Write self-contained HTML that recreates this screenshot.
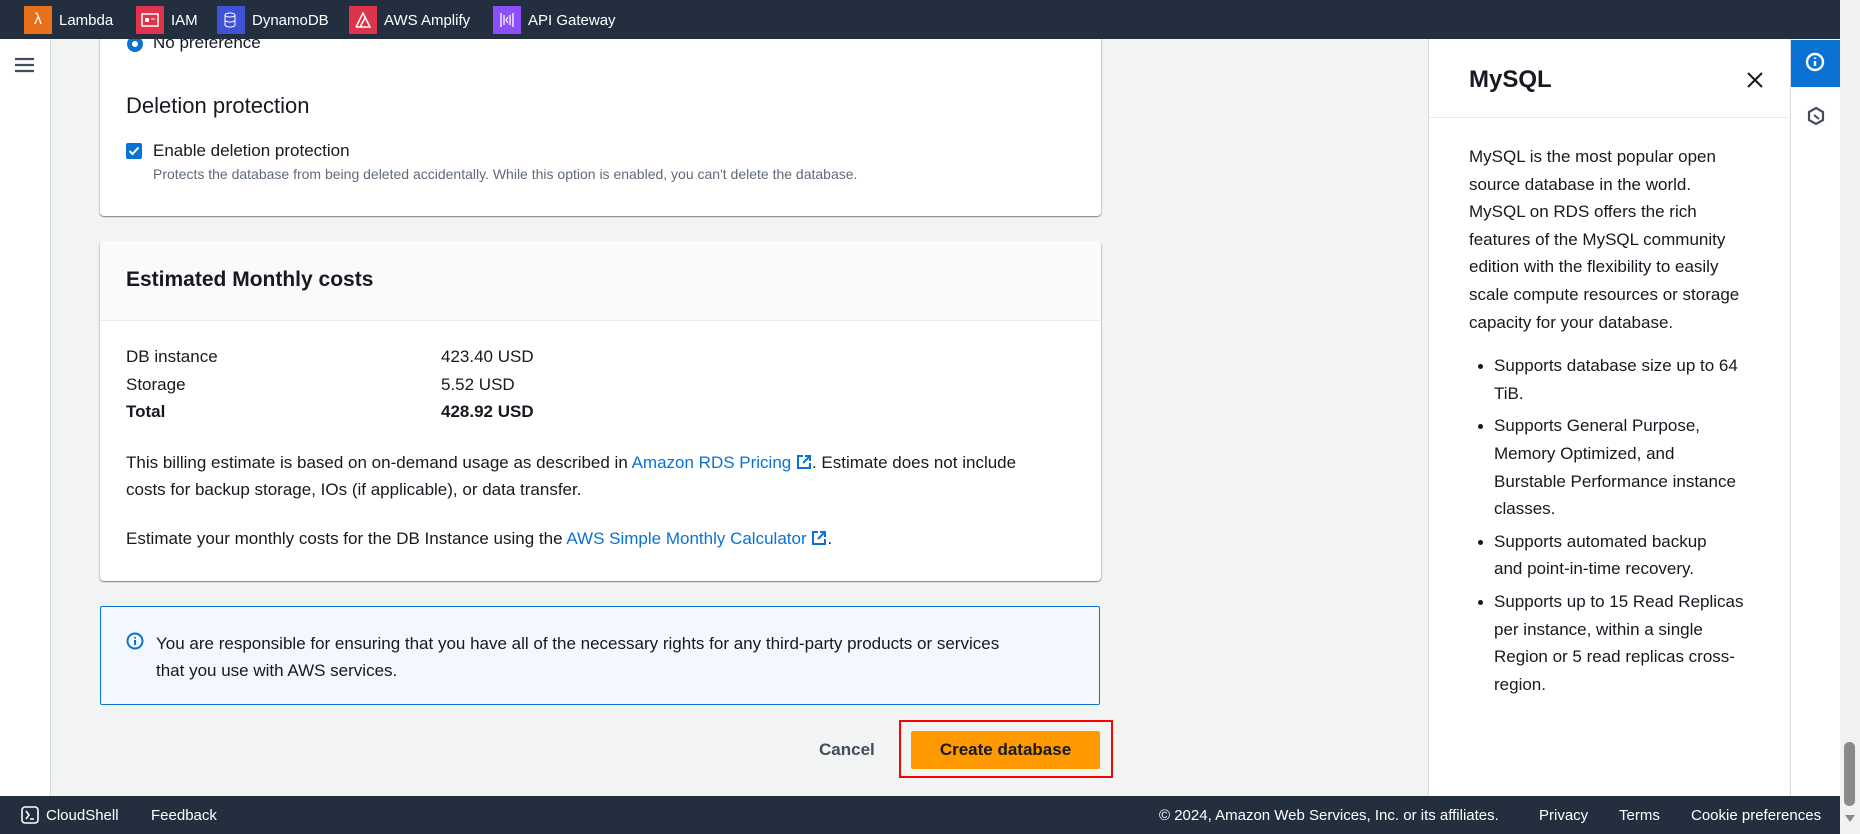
<!DOCTYPE html>
<html><head><meta charset="utf-8"><style>
*{box-sizing:border-box;margin:0;padding:0}
body{width:1860px;height:834px;overflow:hidden;position:relative;background:#f2f3f3;font-family:"Liberation Sans",sans-serif;color:#16191f}
.abs{position:absolute}
#top{left:0;top:0;width:1840px;height:39px;background:#232f3e;z-index:5}
.svc{position:absolute;top:6px;height:28px;display:flex;align-items:center;color:#fff;font-size:15px}
.ic{width:28px;height:28px;margin-right:7px;display:flex;align-items:center;justify-content:center;color:#fff;font-size:16px}
#nav{left:0;top:39px;width:51px;height:757px;background:#fff;border-right:1px solid #d5dbdb}
.card{position:absolute;background:#fff;box-shadow:0 1px 1px rgba(0,28,36,.3),1px 1px 1px rgba(0,28,36,.15),-1px 1px 1px rgba(0,28,36,.15)}
.t17{font-size:17px}
a{color:#0972d3;text-decoration:none}
#panel{left:1428px;top:39px;width:362px;height:757px;background:#fff;border-left:1px solid #d5dbdb}
#rail{left:1790px;top:39px;width:50px;height:757px;background:#fff;border-left:1px solid #d5dbdb}
#scroll{left:1840px;top:0;width:20px;height:834px;background:#f1f1f1}
#bot{left:0;top:796px;width:1840px;height:38px;background:#232f3e;color:#fff;font-size:15px}
#bot span{position:absolute;top:11px}
.ptxt{font-size:17px;line-height:27.6px;color:#16191f}
ul{list-style:none}
li{position:relative;padding-left:25px;margin-bottom:5px}
li:before{content:"";position:absolute;left:9px;top:12px;width:5px;height:5px;border-radius:50%;background:#16191f}
</style></head><body>
<div id="top" class="abs">
 <div class="svc" style="left:24px"><div class="ic" style="background:#e7711b">λ</div>Lambda</div>
 <div class="svc" style="left:136px"><div class="ic" style="background:#dd344c"><svg width="18" height="14"><rect x="1" y="1" width="16" height="12" fill="none" stroke="#fff" stroke-width="1.5"/><rect x="4" y="5" width="4" height="4" fill="#fff"/><line x1="10" y1="6" x2="14" y2="6" stroke="#fff"/></svg></div>IAM</div>
 <div class="svc" style="left:217px"><div class="ic" style="background:#4053d6"><svg width="16" height="18"><ellipse cx="7" cy="4" rx="5" ry="2" fill="none" stroke="#fff"/><path d="M2 4v10c0 1 2 2 5 2s5-1 5-2V4M2 9c0 1 2 2 5 2s5-1 5-2" fill="none" stroke="#fff"/></svg></div>DynamoDB</div>
 <div class="svc" style="left:349px"><div class="ic" style="background:#dd344c"><svg width="18" height="18"><path d="M2 16L9 2l7 14H2M6 16l5-9" fill="none" stroke="#fff" stroke-width="1.5"/></svg></div>AWS Amplify</div>
 <div class="svc" style="left:493px"><div class="ic" style="background:#8c4fff"><svg width="18" height="18"><path d="M3 2v14M15 2v14M6 4v10M12 4v10M10 6l-2 3 2 3" fill="none" stroke="#fff" stroke-width="1.3"/></svg></div>API Gateway</div>
</div>
<div id="nav" class="abs"><svg class="abs" style="left:15px;top:18px" width="19" height="16"><path d="M0 2h19M0 8h19M0 14h19" stroke="#414d5c" stroke-width="2.2"/></svg></div>

<div class="card" style="left:100px;top:20px;width:1001px;height:196px;border-radius:0 0 4px 4px"></div>
<div class="abs" style="left:127px;top:36px;width:16px;height:16px;border-radius:50%;border:5px solid #0972d3;background:#fff"></div>
<div class="abs t17" style="left:153px;top:33px">No preference</div>
<div class="abs" style="left:126px;top:93px;font-size:22px">Deletion protection</div>
<div class="abs" style="left:126px;top:143px;width:16px;height:16px;background:#0972d3;border-radius:2px"><svg width="16" height="16"><path d="M3.5 8l3 3 6-6.5" stroke="#fff" stroke-width="2" fill="none"/></svg></div>
<div class="abs t17" style="left:153px;top:141px">Enable deletion protection</div>
<div class="abs" style="left:153px;top:166px;font-size:14px;color:#5f6b7a">Protects the database from being deleted accidentally. While this option is enabled, you can't delete the database.</div>

<div class="card" style="left:100px;top:241px;width:1001px;height:340px;border-radius:4px;overflow:hidden">
 <div style="height:80px;background:#fafafa;border-bottom:1px solid #e9ebed;padding:27px 0 0 26px;font-size:21px;font-weight:bold">Estimated Monthly costs</div>
</div>
<div class="abs t17" style="left:126px;top:343px;line-height:27.5px">DB instance<br>Storage<br><b>Total</b></div>
<div class="abs t17" style="left:441px;top:343px;line-height:27.5px">423.40 USD<br>5.52 USD<br><b>428.92 USD</b></div>
<div class="abs t17" style="left:126px;top:449px;line-height:27px;width:925px">This billing estimate is based on on-demand usage as described in <a>Amazon RDS Pricing <svg width="16" height="16" style="vertical-align:-2px"><path d="M7 2H2v12h12V9M9 2h5v5M14 2L7 9" fill="none" stroke="#0972d3" stroke-width="2"/></svg></a>. Estimate does not include costs for backup storage, IOs (if applicable), or data transfer.</div>
<div class="abs t17" style="left:126px;top:529px">Estimate your monthly costs for the DB Instance using the <a>AWS Simple Monthly Calculator <svg width="16" height="16" style="vertical-align:-2px"><path d="M7 2H2v12h12V9M9 2h5v5M14 2L7 9" fill="none" stroke="#0972d3" stroke-width="2"/></svg></a>.</div>

<div class="abs" style="left:100px;top:606px;width:1000px;height:99px;background:#f2f8fd;border:1px solid #0972d3;border-radius:2px"></div>
<svg class="abs" style="left:126px;top:632px" width="18" height="18"><circle cx="9" cy="9" r="7.5" fill="none" stroke="#0972d3" stroke-width="2"/><path d="M9 8v5M9 5v1.5" stroke="#0972d3" stroke-width="2"/></svg>
<div class="abs t17" style="left:156px;top:630px;line-height:27px;width:860px">You are responsible for ensuring that you have all of the necessary rights for any third-party products or services that you use with AWS services.</div>

<div class="abs t17" style="left:819px;top:740px;font-weight:bold;color:#414d5c">Cancel</div>
<div class="abs" style="left:899px;top:720px;width:214px;height:58px;border:2px solid #f00"></div>
<div class="abs t17" style="left:911px;top:731px;width:189px;height:38px;background:#ff9900;border-radius:2px;font-weight:bold;text-align:center;line-height:38px">Create database</div>

<div id="panel" class="abs">
 <div class="abs" style="left:40px;top:27px;font-size:24px;font-weight:bold">MySQL</div>
 <svg class="abs" style="left:317px;top:32px" width="18" height="18"><path d="M2 2l14 14M16 2L2 16" stroke="#16191f" stroke-width="2"/></svg>
 <div class="abs" style="left:0;top:78px;width:361px;height:1px;background:#e9ebed"></div>
 <div class="abs ptxt" style="left:40px;top:104px;width:278px">MySQL is the most popular open source database in the world. MySQL on RDS offers the rich features of the MySQL community edition with the flexibility to easily scale compute resources or storage capacity for your database.
 <ul style="margin-top:16px">
 <li>Supports database size up to 64 TiB.</li>
 <li>Supports General Purpose, Memory Optimized, and Burstable Performance instance classes.</li>
 <li>Supports automated backup<br>and point-in-time recovery.</li>
 <li>Supports up to 15 Read Replicas per instance, within a single Region or 5 read replicas cross-region.</li>
 </ul></div>
</div>
<div id="rail" class="abs">
 <div class="abs" style="left:0;top:1px;width:49px;height:47px;background:#0972d3"></div>
 <svg class="abs" style="left:14px;top:13px" width="20" height="20"><circle cx="10" cy="10" r="8" fill="none" stroke="#fff" stroke-width="2.4"/><path d="M10 9v5M10 5.5v1.5" stroke="#fff" stroke-width="2.4"/></svg>
 <svg class="abs" style="left:15px;top:67px" width="20" height="20"><path d="M10 2l7 4v8l-7 4-7-4V6z" fill="none" stroke="#414d5c" stroke-width="2.2"/><path d="M8 9l5 4" stroke="#414d5c" stroke-width="2"/></svg>
</div>
<div id="scroll" class="abs"><div class="abs" style="left:4px;top:742px;width:11px;height:64px;background:#8a8a8a;border-radius:5px"></div><div class="abs" style="left:5px;top:815px;width:0;height:0;border-left:5px solid transparent;border-right:5px solid transparent;border-top:7px solid #8a8a8a"></div></div>
<div id="bot" class="abs">
 <svg class="abs" style="left:21px;top:10px" width="18" height="18"><rect x="1" y="1" width="16" height="16" rx="3" fill="none" stroke="#fff" stroke-width="1.6"/><path d="M5 5l3 4-3 4M9 13h4" stroke="#fff" stroke-width="1.6" fill="none"/></svg>
 <span style="left:46px">CloudShell</span>
 <span style="left:151px">Feedback</span>
 <span style="left:1159px">© 2024, Amazon Web Services, Inc. or its affiliates.</span>
 <span style="left:1539px">Privacy</span>
 <span style="left:1619px">Terms</span>
 <span style="left:1691px">Cookie preferences</span>
</div>
</body></html>
